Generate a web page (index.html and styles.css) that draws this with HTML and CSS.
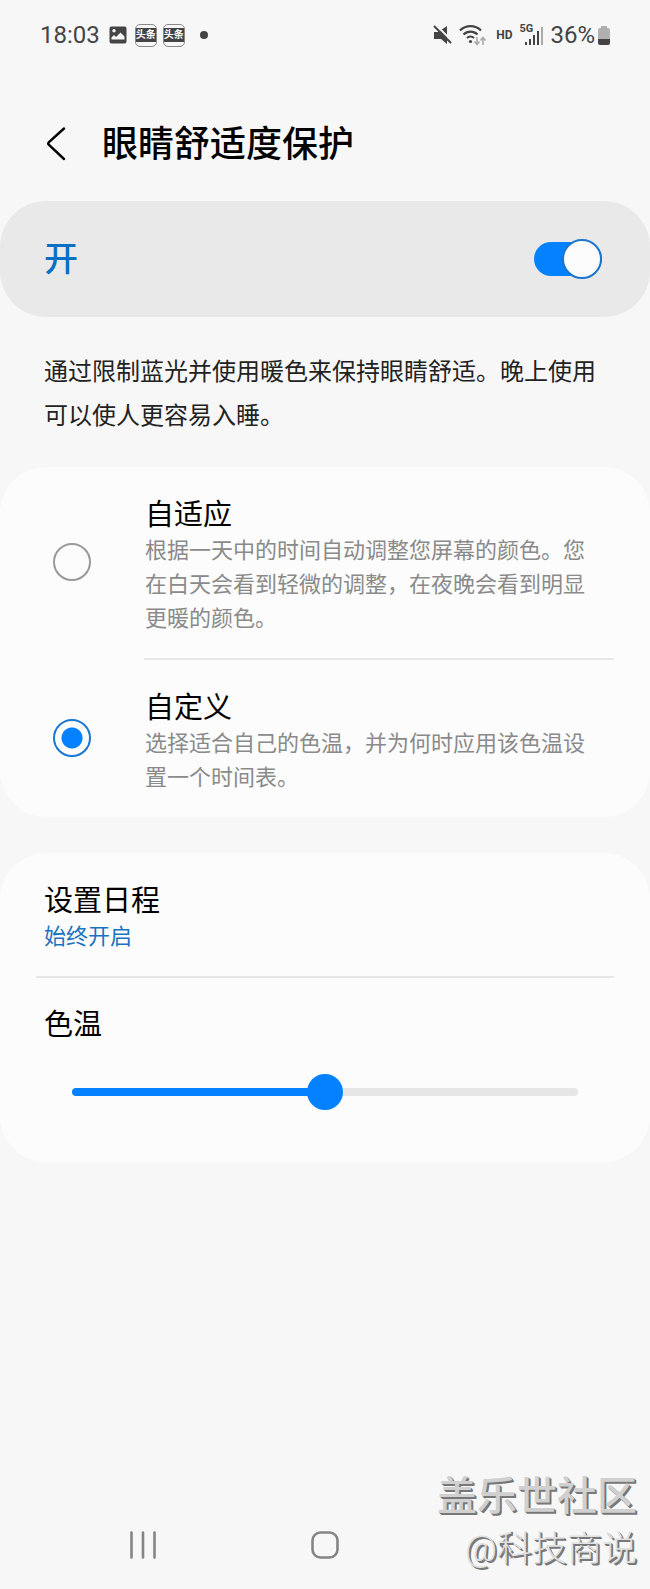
FILE: index.html
```html
<!DOCTYPE html>
<html lang="zh-CN">
<head>
  <meta charset="UTF-8">
  <meta name="viewport" content="width=device-width, initial-scale=1.0">
  <title>眼睛舒适度保护</title>
  <link rel="stylesheet" href="styles.css">
</head>
<body>
  <div class="status-bar">
    <div class="status-left">
      <span class="time">18:03</span>
      <svg class="icon-image" width="18" height="18" viewBox="0 0 18 18">
        <path fill="#444" fill-rule="evenodd" d="M2.500 0.500h13a2 2 0 0 1 2 2v13a2 2 0 0 1-2 2h-13a2 2 0 0 1-2-2v-13a2 2 0 0 1 2-2zM2.500 13.500h13v-3l-4-4-4.500 4.500-2-2-2.500 2.500zM5 3a1.700 1.700 0 1 0 0 3.400a1.700 1.700 0 0 0 0-3.400z"/>
      </svg>
      <span class="app-icon"><span>头条</span></span>
      <span class="app-icon"><span>头条</span></span>
      <span class="dot"></span>
    </div>
    <div class="status-right">
      <svg width="20" height="20" viewBox="0 0 20 20">
        <path fill="#444" d="M1 7h4l9-6v18l-6-5H1z"/>
        <path stroke="#f7f7f7" stroke-width="2" d="M3 0l17 17"/>
        <path stroke="#444" stroke-width="2" d="M1 1l17 17"/>
      </svg>
      <svg class="icon-wifi" width="28" height="22" viewBox="0 0 28 22">
        <g fill="none" stroke="#444" stroke-width="2.200">
          <path d="M1 6.500a15 15 0 0 1 21 0"/>
          <path d="M4.500 10.500a10 10 0 0 1 14 0"/>
          <path d="M8 14a5 5 0 0 1 7 0"/>
        </g>
        <circle cx="11.500" cy="17.500" r="1.600" fill="#444"/>
        <g fill="none" stroke="#aaa" stroke-width="1.600">
          <path d="M18 13v7M15.500 17.500l2.500 3 2.500-3"/>
          <path d="M24 21v-7M21.500 16.500l2.500-3 2.500 3"/>
        </g>
      </svg>
      <span class="hd">HD</span>
      <span class="signal">
        <span class="signal-type">5G</span>
        <svg width="18" height="18" viewBox="0 0 18 18">
          <path fill="#444" d="M0 15h2v3H0zM4 12h2v6H4zM8 8h2v10H8zM12 4h2v14h-2z"/>
          <path fill="#aaa" d="M16 0h2v18h-2z"/>
        </svg>
      </span>
      <span class="percent">36%</span>
      <svg class="icon-battery" width="12" height="19" viewBox="0 0 12 19">
        <path fill="#b0b0b0" d="M3 0h6v2h1a2 2 0 0 1 2 2v9H0V4a2 2 0 0 1 2-2h1z"/>
        <path fill="#444" d="M0 13h12v4a2 2 0 0 1-2 2H2a2 2 0 0 1-2-2z"/>
      </svg>
    </div>
  </div>

  <header class="header">
    <button class="back" aria-label="返回">
      <svg width="20" height="34" viewBox="0 0 20 34">
        <path d="M18 1.500L3 15q-1.500 1.500 0 3L18 32" fill="none" stroke="#000" stroke-width="2.400" stroke-linecap="round"/>
      </svg>
    </button>
    <h1>眼睛舒适度保护</h1>
  </header>

  <main>
    <label class="main-switch">
      <span>开</span>
      <input type="checkbox" role="switch" checked>
    </label>

    <p class="description">通过限制蓝光并使用暖色来保持眼睛舒适。晚上使用可以使人更容易入睡。</p>

    <section class="card">
      <label class="option">
        <input type="radio" name="mode">
        <span class="option-text">
          <span class="item-title">自适应</span>
          <span class="item-sub">根据一天中的时间自动调整您屏幕的颜色。您在白天会看到轻微的调整，在夜晚会看到明显更暖的颜色。</span>
        </span>
      </label>
      <hr class="indent">
      <label class="option">
        <input type="radio" name="mode" checked>
        <span class="option-text">
          <span class="item-title">自定义</span>
          <span class="item-sub">选择适合自己的色温，并为何时应用该色温设置一个时间表。</span>
        </span>
      </label>
    </section>

    <section class="card">
      <button class="schedule">
        <span class="item-title">设置日程</span>
        <span class="item-sub link">始终开启</span>
      </button>
      <hr>
      <div class="temperature">
        <label class="item-title" for="temp">色温</label>
        <input type="range" id="temp" min="0" max="100" value="50">
      </div>
    </section>
  </main>

  <nav class="nav-bar">
    <button aria-label="最近">
      <svg width="28" height="28" viewBox="0 0 28 28">
        <path d="M2.500 1.500v25M14 1.500v25M25.500 1.500v25" stroke="#858585" stroke-width="2.600" stroke-linecap="round"/>
      </svg>
    </button>
    <button aria-label="主页">
      <svg width="28" height="28" viewBox="0 0 28 28">
        <rect x="1.500" y="1.500" width="25" height="25" rx="8" fill="none" stroke="#858585" stroke-width="2.600"/>
      </svg>
    </button>
    <button aria-label="返回">
      <svg width="28" height="28" viewBox="0 0 28 28">
        <path d="M19 2L8 14l11 12" fill="none" stroke="#858585" stroke-width="2.600" stroke-linecap="round"/>
      </svg>
    </button>
  </nav>

  <div class="watermark">
    <div class="community">盖乐世社区</div>
    <div class="author">@科技商说</div>
  </div>
</body>
</html>
```
FILE: styles.css
```css
*,
*::before {
  box-sizing: border-box;
}
body {
  margin: 0;
  min-height: 100vh;
  display: flex;
  flex-direction: column;
  position: relative;
  background-color: #f7f7f7;
  color: #000;
  font-family: Roboto, "Noto Sans CJK SC", sans-serif;
}
button {
  border: none;
  background: none;
  padding: 0;
  font: inherit;
  color: inherit;
  cursor: pointer;
}
svg {
  display: block;
}

/* status bar */
.status-bar {
  display: flex;
  justify-content: space-between;
  align-items: center;
  height: 70px;
  padding: 0 40px;
  color: #444;
  font-size: 24px;
}
.status-left,
.status-right {
  display: flex;
  align-items: center;
}
.icon-image {
  margin: 0 8px 0 9px;
}
.app-icon {
  display: flex;
  align-items: center;
  width: 22px;
  height: 23px;
  margin-right: 6px;
  border: 1px solid #888;
  border-radius: 5px;
}
.app-icon span {
  flex: 1;
  background-color: #444;
  color: #fff;
  font-size: 10px;
  font-weight: bold;
  line-height: 14px;
  text-align: center;
  white-space: nowrap;
}
.dot {
  width: 8px;
  height: 8px;
  margin-left: 9px;
  border-radius: 50%;
  background-color: #444;
}
.icon-wifi {
  margin-left: 6px;
}
.hd {
  margin-left: 9px;
  font-size: 12px;
  font-weight: bold;
}
.signal {
  display: flex;
  align-items: flex-end;
  position: relative;
  height: 20px;
  margin: 0 7px 0 11px;
  padding-left: 2px;
}
.signal-type {
  position: absolute;
  top: -2px;
  left: -4px;
  font-size: 11px;
  font-weight: bold;
  line-height: 12px;
}
.icon-battery {
  margin-left: 3px;
}

/* header */
.header {
  display: flex;
  align-items: center;
  padding: 50px 44px 33px;
}
.back {
  width: 58px;
  padding-left: 2px;
}
h1 {
  margin: 0;
  padding-top: 2px;
  font-size: 36px;
  font-weight: 500;
  line-height: 46px;
}

.main-switch {
  display: flex;
  justify-content: space-between;
  align-items: center;
  height: 116px;
  padding: 0 48px 0 44px;
  border-radius: 46px;
  background-color: #e9e9e9;
  color: #0a70c6;
  font-size: 34px;
  font-weight: 500;
  line-height: 44px;
}
.main-switch input {
  appearance: none;
  position: relative;
  width: 68px;
  height: 34px;
  margin: 0;
  border-radius: 17px;
  background-color: #0381fe;
}
.main-switch input::before {
  content: "";
  position: absolute;
  top: -3px;
  left: 0;
  width: 40px;
  height: 40px;
  border: 2px solid #1a75cf;
  border-radius: 50%;
  background-color: #fcfcfc;
}
.main-switch input:checked::before {
  left: auto;
  right: 0;
}

.description {
  margin: 33px 44px 29px;
  color: #222;
  font-size: 24px;
  line-height: 44px;
}

/* cards */
.card {
  margin-bottom: 36px;
  border-radius: 46px;
  background-color: #fcfcfc;
}
.card hr {
  height: 2px;
  margin: 0 36px;
  border: none;
  background-color: #e6e6e6;
}
.card hr.indent {
  margin-left: 144px;
}
.item-title,
.item-sub {
  display: block;
}
.item-title {
  font-size: 29px;
  line-height: 38px;
}
.item-sub {
  color: #8a8a8a;
  font-size: 22px;
  line-height: 34px;
}
.item-sub.link {
  color: #1a73c0;
}
.option {
  display: flex;
  align-items: center;
  gap: 54px;
  padding: 29px 56px 22px 53px;
}
.option input {
  appearance: none;
  flex: none;
  width: 38px;
  height: 38px;
  margin: 0 0 8px;
  border: 2px solid #999;
  border-radius: 50%;
}
.option input:checked {
  border-color: #1a78d2;
  background: radial-gradient(circle, #0381fe 10px, transparent 11px);
}
.schedule {
  display: block;
  width: 100%;
  padding: 29px 44px 22px;
  text-align: left;
}
.temperature {
  padding: 28px 44px 52px;
}
.temperature input {
  appearance: none;
  display: block;
  width: calc(100% - 56px);
  height: 36px;
  margin: 30px 28px 0;
  background: none;
}
.temperature input::-webkit-slider-runnable-track {
  height: 8px;
  border-radius: 4px;
  background: linear-gradient(to right, #0381fe 50%, #e6e6e6 50%);
}
.temperature input::-webkit-slider-thumb {
  appearance: none;
  width: 36px;
  height: 36px;
  margin-top: -14px;
  border-radius: 50%;
  background-color: #0381fe;
}

/* bottom navigation */
.nav-bar {
  display: flex;
  justify-content: space-around;
  margin-top: auto;
  padding: 0 52px 30px;
}

.watermark {
  position: absolute;
  right: 13px;
  bottom: 14px;
  color: #d0d0d0;
  text-align: right;
  text-shadow: 1px 1px 0 #777, 2px 2px 0 #777;
  pointer-events: none;
}
.community {
  font-size: 40px;
  font-weight: 500;
  line-height: 56px;
}
.author {
  color: #e0e0e0;
  font-size: 35px;
  font-weight: 300;
  line-height: 50px;
}
```
